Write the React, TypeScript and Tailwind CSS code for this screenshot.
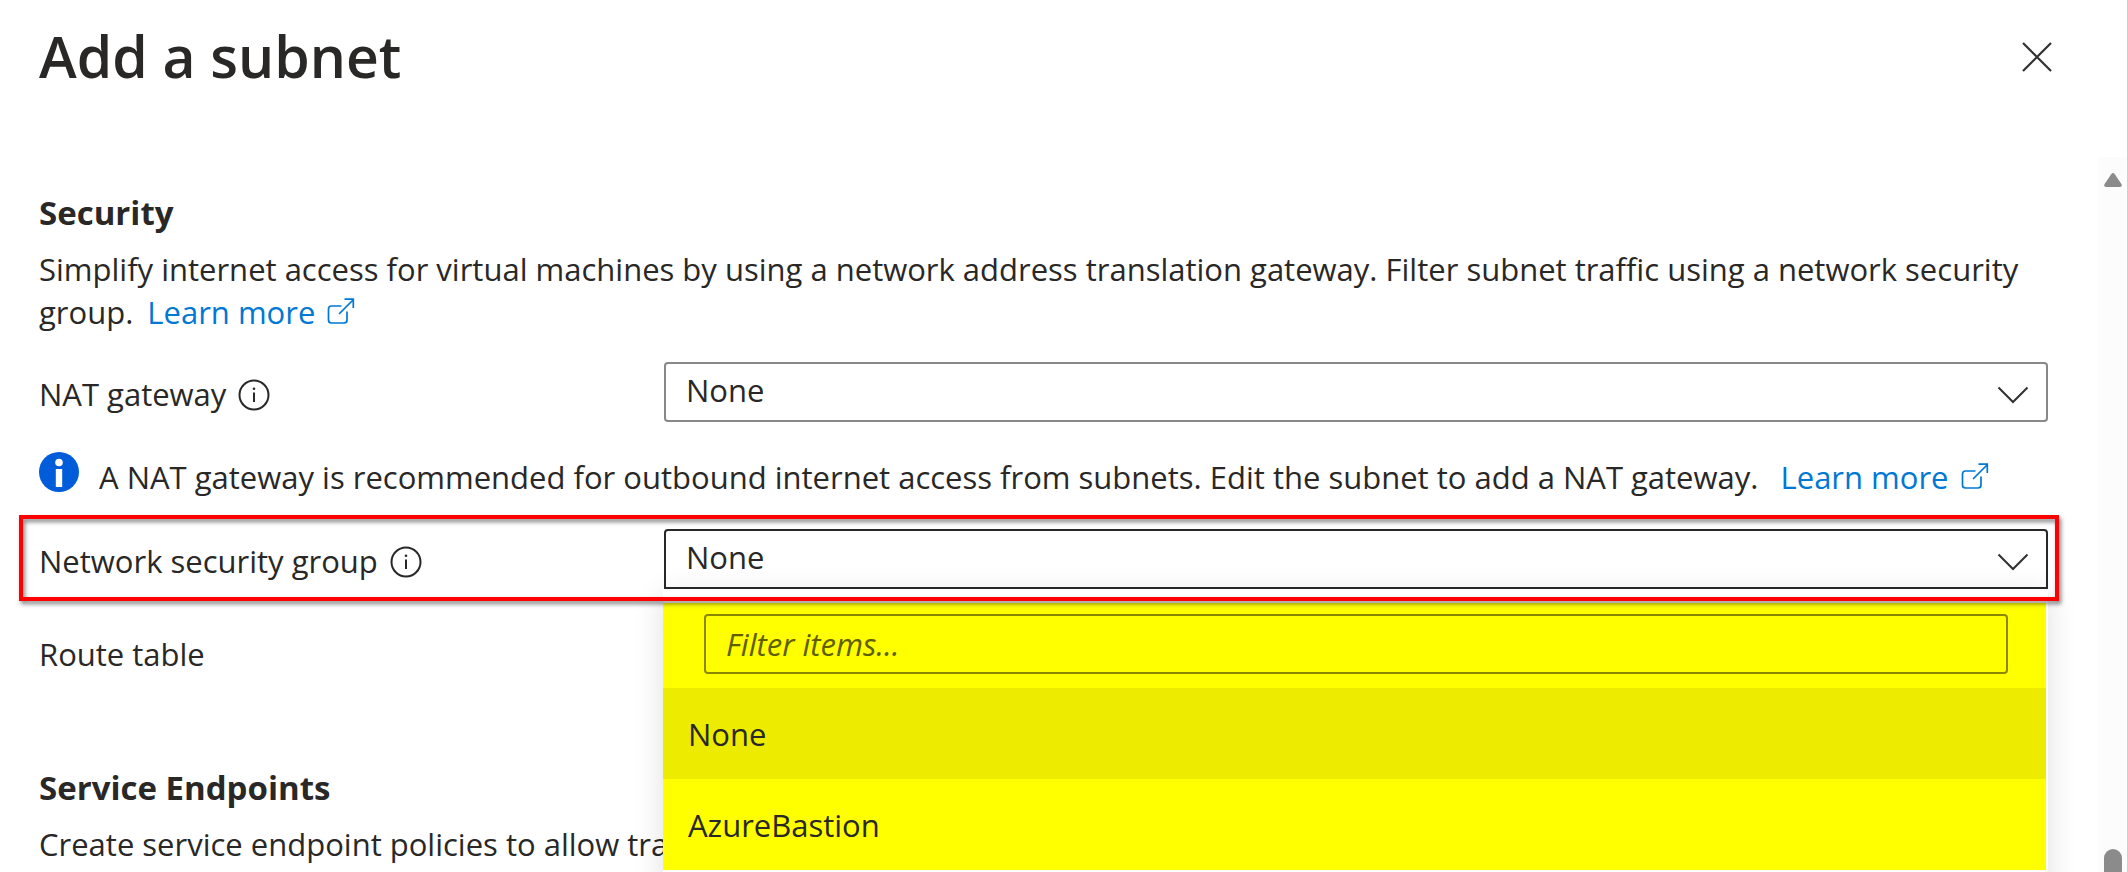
import React from "react";

function InfoCircle() {
  return (
    <svg viewBox="0 0 32 32" className="h-8 w-8" fill="none" stroke="#292827" strokeWidth="2" aria-hidden="true">
      <circle cx="16" cy="16" r="14.5" />
      <path d="M16 13.5V23" />
      <circle cx="16" cy="9.8" r="1.3" fill="#292827" stroke="none" />
    </svg>
  );
}

function InfoSolid() {
  return (
    <svg viewBox="0 0 40 40" className="h-10 w-10 shrink-0" aria-hidden="true">
      <circle cx="20" cy="20" r="20" fill="#015cda" />
      <circle cx="20" cy="10.5" r="3.8" fill="#fff" />
      <rect x="16.8" y="17" width="6.4" height="18" fill="#fff" />
    </svg>
  );
}

function External() {
  return (
    <svg viewBox="0 0 28 26" className="ml-3 inline-block h-[26px] w-7 align-baseline" fill="none" stroke="#0078d4" strokeWidth="1.7" aria-hidden="true">
      <path d="M14.5 8H4.5Q1.5 8 1.5 11V22Q1.5 25 4.5 25H17Q20 25 20 22V13.5" />
      <path d="M12 16L26 2M17.5 1.2H26.3V10" />
    </svg>
  );
}

function LearnMore() {
  return (
    <a href="#learn-more" className="ml-1.5 whitespace-nowrap text-[#0078d4]">
      Learn more
      <External />
    </a>
  );
}

function Chevron() {
  return (
    <svg viewBox="0 0 32 18" className="pointer-events-none absolute right-[19px] top-6 h-[18px] w-8" fill="none" stroke="#323130" strokeWidth="2" aria-hidden="true">
      <path d="M1.5 1.5L16 16L30.5 1.5" />
    </svg>
  );
}

function Field({ id, label, open, children }: { id: string; label: string; open?: boolean; children?: React.ReactNode }) {
  return (
    <div className="relative flex items-center">
      <div className="flex w-[625px] shrink-0 items-center gap-3 pt-1">
        <label htmlFor={id}>{label}</label>
        <button type="button" aria-label={"About " + label} className="pt-0.5">
          <InfoCircle />
        </button>
      </div>
      <div className="relative min-w-0 flex-1">
        <select
          id={id}
          className={
            open
              ? "block h-[60px] w-full appearance-none rounded-t border-2 border-[#292827] bg-white pb-1 pl-5 outline-none"
              : "block h-[60px] w-full appearance-none rounded border-2 border-[#8a8886] bg-white pb-1 pl-5 outline-none"
          }
        >
          <option>None</option>
          {open && <option>AzureBastion</option>}
        </select>
        <Chevron />
        {children}
      </div>
      {open && (
        <div className="pointer-events-none absolute -bottom-3 -left-5 -right-[11px] -top-3.5 z-20 border-4 border-[#ff0000] drop-shadow-[2px_3px_2px_rgba(0,0,0,0.5)]" />
      )}
    </div>
  );
}

export default function App() {
  return (
    <main className="flex h-screen flex-col overflow-hidden border-r border-[#d6cfae] bg-white font-['Open_Sans','Noto_Sans',sans-serif] text-[31px] leading-[43px] text-[#292827]">
      <header className="flex h-[157px] shrink-0 items-start justify-between pl-[39px] pr-[75px] pt-4">
        <h1 className="text-[57px] font-semibold leading-[80px]">Add a subnet</h1>
        <button type="button" aria-label="Close" className="mt-[26px]">
          <svg viewBox="0 0 30 30" className="h-[30px] w-[30px]" stroke="#323130" strokeWidth="2.2" aria-hidden="true">
            <path d="M1 1L29 29M29 1L1 29" />
          </svg>
        </button>
      </header>

      <div className="flex min-h-0 flex-1">
        <div className="min-w-0 flex-1 pl-[39px] pr-[50px] pt-[34px]">
          <h2 className="text-[33px] font-bold">Security</h2>
          <p className="mt-3.5">
            Simplify internet access for virtual machines by using a network address translation gateway. Filter subnet
            traffic using a network security group. <LearnMore />
          </p>

          <div className="mt-7">
            <Field id="nat" label="NAT gateway" />
          </div>

          <div className="mt-[30px] flex gap-5">
            <InfoSolid />
            <p className="pt-1">
              A NAT gateway is recommended for outbound internet access from subnets. Edit the subnet to add a NAT
              gateway.&nbsp; <LearnMore />
            </p>
          </div>

          <div className="mt-[30px]">
            <Field id="nsg" label="Network security group" open>
              <div className="absolute -left-px right-0 top-full z-10 h-[300px] bg-white pr-0.5 pt-3.5 shadow-[0_6px_28px_rgba(0,0,0,0.13)]">
                <div className="bg-[#ffff00]">
                  <div className="pb-3.5 pl-[41px] pr-[38px] pt-[11px]">
                    <input
                      type="text"
                      aria-label="Filter items"
                      placeholder="Filter items..."
                      className="block h-[60px] w-full rounded border-2 border-[#8a8800] bg-transparent pl-5 italic outline-none placeholder:text-[#5f5e00]"
                    />
                  </div>
                  <ul role="listbox" aria-label="Network security group">
                    <li role="option" aria-selected="true" className="flex h-[91px] items-center bg-[#edeb00] pl-[25px] pt-0.5">
                      None
                    </li>
                    <li role="option" aria-selected="false" className="flex h-[91px] items-center pl-[25px] pt-0.5">
                      AzureBastion
                    </li>
                  </ul>
                </div>
              </div>
            </Field>
          </div>

          <p className="mt-11">Route table</p>

          <h2 className="mt-[90px] text-[33px] font-bold">Service Endpoints</h2>
          <p className="mt-3.5 w-[624px] overflow-hidden whitespace-nowrap">Create service endpoint policies to allow traffic</p>
        </div>

        <div className="flex w-[29px] shrink-0 flex-col items-center justify-between bg-[#fcfcfc] pt-4" aria-hidden="true">
          <svg viewBox="0 0 18 14" className="h-3.5 w-[18px]" fill="#8b8b8b">
            <path d="M7.2 1.2Q9 -1 10.8 1.2L17.4 11Q18.6 13.8 16 14H2Q-.6 13.8 .6 11Z" />
          </svg>
          <div className="h-[23px] w-[18px] rounded-t-full bg-[#8b8b8b]" />
        </div>
      </div>
    </main>
  );
}
